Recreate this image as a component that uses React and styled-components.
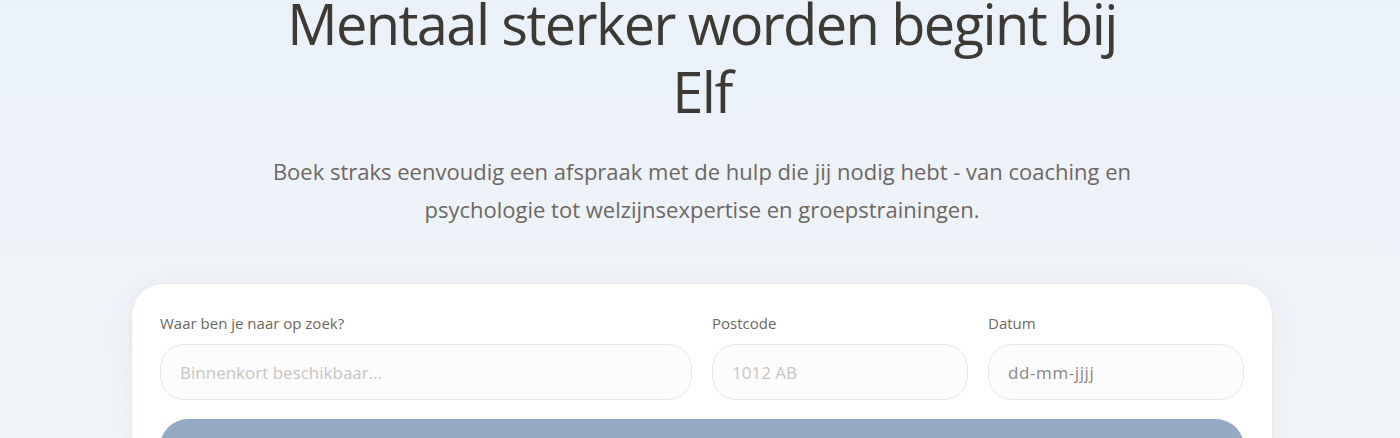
import React from 'react';
import styled, { createGlobalStyle } from 'styled-components';

const GlobalStyle = createGlobalStyle`
  html, body {
    margin: 0;
    padding: 0;
  }
  body {
    font-family: 'Open Sans', 'Noto Sans', sans-serif;
    background: linear-gradient(180deg, #eaf1f9 0%, #f0f4f8 60%, #f6f7f9 100%);
    min-height: 438px;
    overflow: hidden;
  }
`;

const Hero = styled.section`
  display: flex;
  flex-direction: column;
  align-items: center;
  padding: 0 16px 40px 20px;
`;

const Title = styled.h1`
  margin: -11px 0 0;
  max-width: 880px;
  font-size: 56px;
  line-height: 68px;
  font-weight: 400;
  color: #3d3935;
  text-align: center;
  letter-spacing: -1.6px;
`;

const Lead = styled.p`
  margin: 27px 0 0;
  max-width: 900px;
  font-size: 22px;
  line-height: 38px;
  color: #6d6762;
  text-align: center;
`;

const SearchCard = styled.form`
  margin-top: 55px;
  width: 1142px;
  box-sizing: border-box;
  background: #ffffff;
  border: 1px solid #e9e9e9;
  border-radius: 32px;
  box-shadow: 0 8px 30px rgba(60, 70, 90, 0.06);
  padding: 28px 28px 40px;
`;

const Fields = styled.div`
  display: grid;
  grid-template-columns: repeat(4, minmax(0, 1fr));
  gap: 20px;
`;

const Field = styled.label`
  display: flex;
  flex-direction: column;
  gap: 10px;
  min-width: 0;
  grid-column: span ${(p) => p.$span || 1};
`;

const Label = styled.span`
  font-size: 15px;
  line-height: 22px;
  color: #6d6762;
`;

const Input = styled.input`
  width: 100%;
  height: 56px;
  box-sizing: border-box;
  border: 1px solid #e8e6e4;
  border-radius: 24px;
  background: #fcfcfc;
  padding: 0 19px;
  font-family: inherit;
  font-size: 17px;
  color: ${(p) => (p.$muted ? '#8d8782' : '#3d3935')};
  letter-spacing: ${(p) => (p.$muted ? '0.6px' : '0')};
  outline: none;

  &::placeholder {
    color: ${(p) => (p.$muted ? '#8d8782' : '#c9c5c1')};
  }
`;

const SubmitButton = styled.button`
  margin-top: 19px;
  width: 100%;
  height: 56px;
  border: none;
  border-radius: 32px;
  background: #94abc3;
  color: #ffffff;
  font-family: inherit;
  font-size: 17px;
`;

const App = () => (
  <>
    <GlobalStyle />
    <Hero>
      <Title>Mentaal sterker worden begint bij Elf</Title>
      <Lead>
        Boek straks eenvoudig een afspraak met de hulp die jij nodig hebt - van coaching en psychologie tot
        welzijnsexpertise en groepstrainingen.
      </Lead>
      <SearchCard onSubmit={(e) => e.preventDefault()}>
        <Fields>
          <Field $span={2}>
            <Label>Waar ben je naar op zoek?</Label>
            <Input type="text" placeholder="Binnenkort beschikbaar..." />
          </Field>
          <Field>
            <Label>Postcode</Label>
            <Input type="text" placeholder="1012 AB" />
          </Field>
          <Field>
            <Label>Datum</Label>
            <Input type="text" placeholder="dd-mm-jjjj" $muted />
          </Field>
        </Fields>
        <SubmitButton type="submit">Zoeken</SubmitButton>
      </SearchCard>
    </Hero>
  </>
);

export default App;
